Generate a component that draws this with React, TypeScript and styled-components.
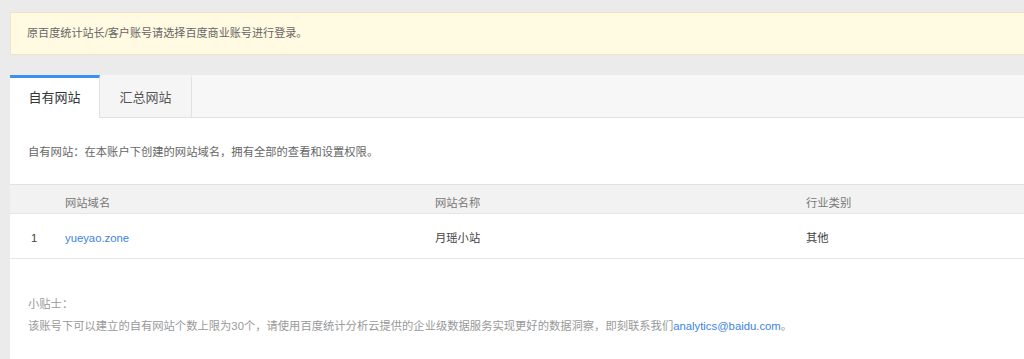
import styled, { createGlobalStyle } from "styled-components";

const GlobalStyle = createGlobalStyle`
  html, body {
    margin: 0;
    padding: 0;
    background: #ebebeb;
    font-family: "Liberation Sans", "Noto Sans CJK SC", sans-serif;
    font-size: 11.3px;
    color: #666;
  }
`;

const Page = styled.div`
  padding: 12px 0 0 10px;
`;

const Notice = styled.div`
  background: #fffae1;
  border: 1px solid #ebe5c6;
  border-right: 0;
  height: 41px;
  line-height: 41px;
  padding-left: 16px;
  font-size: 11.1px;
  color: #666;
`;

const Card = styled.div`
  margin-top: 20px;
  background: #fff;
  padding-bottom: 30px;
`;

const TabBar = styled.div`
  display: flex;
  height: 42px;
  background: #f7f7f7;
  border-bottom: 1px solid #e1e1e1;
`;

const Tab = styled.div<{ $active?: boolean }>`
  box-sizing: border-box;
  width: ${(p) => (p.$active ? 90 : 92)}px;
  height: ${(p) => (p.$active ? 43 : 42)}px;
  text-align: center;
  font-size: 13px;
  line-height: 40px;
  color: ${(p) => (p.$active ? "#333" : "#555")};
  background: ${(p) => (p.$active ? "#fff" : "#f5f5f5")};
  border-top: 3px solid ${(p) => (p.$active ? "#3e8ff0" : "transparent")};
  border-right: 1px solid #e1e1e1;
`;

const Desc = styled.p`
  margin: 0;
  padding: 24px 0 0 18px;
  height: 42px;
  line-height: 20px;
  color: #666;
`;

const Table = styled.div`
  border-top: 1px solid #e1e1e1;
`;

const Row = styled.div<{ $head?: boolean }>`
  display: grid;
  grid-template-columns: 55px 370px 371px 1fr;
  height: ${(p) => (p.$head ? 28 : 44)}px;
  line-height: ${(p) => (p.$head ? 36 : 48)}px;
  background: ${(p) => (p.$head ? "#f2f2f2" : "#fff")};
  border-bottom: 1px solid #e6e6e6;
  color: ${(p) => (p.$head ? "#777" : "#444")};
`;

const Index = styled.span`
  padding-left: 21px;
  color: #444;
`;

const Link = styled.a`
  color: #3b84e6;
  text-decoration: none;
`;

const Tips = styled.div`
  padding: 34px 0 0 18px;
  color: #999;
  line-height: 22px;
`;

export default function App() {
  return (
    <>
      <GlobalStyle />
      <Page>
        <Notice>原百度统计站长/客户账号请选择百度商业账号进行登录。</Notice>
        <Card>
          <TabBar>
            <Tab $active>自有网站</Tab>
            <Tab>汇总网站</Tab>
          </TabBar>
          <Desc>自有网站：在本账户下创建的网站域名，拥有全部的查看和设置权限。</Desc>
          <Table>
            <Row $head>
              <span />
              <span>网站域名</span>
              <span>网站名称</span>
              <span>行业类别</span>
            </Row>
            <Row>
              <Index>1</Index>
              <span>
                <Link href="#">yueyao.zone</Link>
              </span>
              <span>月瑶小站</span>
              <span>其他</span>
            </Row>
          </Table>
          <Tips>
            <div>小贴士：</div>
            <div>
              该账号下可以建立的自有网站个数上限为30个，请使用百度统计分析云提供的企业级数据服务实现更好的数据洞察，即刻联系我们
              <Link href="#">analytics@baidu.com</Link>。
            </div>
          </Tips>
        </Card>
      </Page>
    </>
  );
}
